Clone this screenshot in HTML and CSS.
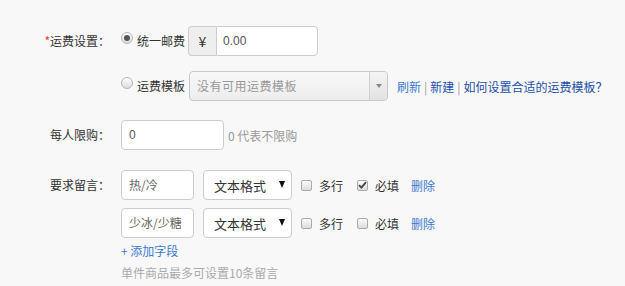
FILE: index.html
```html
<!DOCTYPE html>
<html lang="zh-CN">
  <head>
    <meta charset="UTF-8" />
    <meta name="viewport" content="width=device-width, initial-scale=1.0" />
    <title>运费设置</title>
    <link rel="stylesheet" href="styles.css">
  </head>
  <body>
    <div class="form">
      <!-- 运费设置 -->
      <div class="form-row row-freight">
        <div class="form-label"><span class="required">*</span>运费设置：</div>
        <div class="form-field">
          <div class="option">
            <label class="radio-label">
              <span class="radio checked"></span>
              <span class="radio-text">统一邮费</span>
            </label>
            <div class="input-group">
              <span class="input-addon">¥</span>
              <span class="input input-price">0.00</span>
            </div>
          </div>
          <div class="option">
            <label class="radio-label">
              <span class="radio"></span>
              <span class="radio-text">运费模板</span>
            </label>
            <div class="select-disabled">
              <span class="select-text">没有可用运费模板</span>
              <span class="select-arrow"></span>
            </div>
            <div class="links">
              <a class="link link-light">刷新</a>
              <span class="sep">|</span>
              <a class="link">新建</a>
              <span class="sep">|</span>
              <a class="link">如何设置合适的运费模板？</a>
            </div>
          </div>
        </div>
      </div>

      <!-- 每人限购 -->
      <div class="form-row row-limit">
        <div class="form-label">每人限购：</div>
        <div class="form-field">
          <div class="option">
            <span class="input input-limit">0</span>
            <span class="help">0 代表不限购</span>
          </div>
        </div>
      </div>

      <!-- 要求留言 -->
      <div class="form-row">
        <div class="form-label">要求留言：</div>
        <div class="form-field">
          <div class="message-list">
            <div class="option">
              <span class="input input-msg">热/冷</span>
              <div class="select">
                <span>文本格式</span>
                <span class="caret"></span>
              </div>
              <label class="check-label">
                <span class="checkbox"></span>
                <span>多行</span>
              </label>
              <label class="check-label">
                <span class="checkbox checked">
                  <svg width="9" height="8" viewBox="0 0 9 8">
                    <path d="M1 4.2 L3.4 6.6 L8 1.2" fill="none" stroke="#444" stroke-width="1.8" />
                  </svg>
                </span>
                <span>必填</span>
              </label>
              <a class="link-delete">删除</a>
            </div>
            <div class="option">
              <span class="input input-msg">少冰/少糖</span>
              <div class="select">
                <span>文本格式</span>
                <span class="caret"></span>
              </div>
              <label class="check-label">
                <span class="checkbox"></span>
                <span>多行</span>
              </label>
              <label class="check-label">
                <span class="checkbox"></span>
                <span>必填</span>
              </label>
              <a class="link-delete">删除</a>
            </div>
          </div>
          <a class="add-field">+ 添加字段</a>
          <p class="hint">单件商品最多可设置10条留言</p>
        </div>
      </div>
    </div>
  </body>
</html>
```

FILE: styles.css
```css
/* Reset and base styles */
* {
  margin: 0;
  padding: 0;
  box-sizing: border-box;
}

body {
  background-color: #f8f8f8;
  font-family: "Noto Sans CJK SC", "Liberation Sans", sans-serif;
  font-size: 12px;
  color: #333;
}

.form {
  padding-top: 26px;
}

/* Rows */
.form-row {
  display: flex;
  align-items: flex-start;
}

.row-freight {
  margin-bottom: 19px;
}

.row-limit {
  margin-bottom: 20px;
}

.form-label {
  width: 110px;
  flex-shrink: 0;
  text-align: right;
  line-height: 30px;
  margin-right: 11px;
}

.required {
  color: #e4393c;
}

.form-field {
  display: flex;
  flex-direction: column;
  gap: 15px;
}

.option {
  display: flex;
  align-items: center;
  height: 30px;
}

/* Inputs */
.input {
  height: 30px;
  line-height: 28px;
  padding: 0 7px;
  background-color: #fff;
  border: 1px solid #ccc;
  border-radius: 4px;
  font-family: "Liberation Sans", "Noto Sans CJK SC", sans-serif;
  color: #555;
}

.input-group {
  display: flex;
}

.input-addon {
  width: 28px;
  height: 30px;
  line-height: 28px;
  text-align: center;
  background-color: #eee;
  border: 1px solid #ccc;
  border-right: none;
  border-radius: 4px 0 0 4px;
  color: #333;
  font-size: 14px;
}

.input-price {
  width: 102px;
  border-radius: 0 4px 4px 0;
  padding-left: 6px;
}

.input-limit {
  width: 103px;
}

.input-msg {
  width: 73px;
  font-family: "Noto Sans CJK SC", sans-serif;
  color: #666;
  margin-right: 9px;
}

/* Radio */
.radio-label {
  display: flex;
  align-items: center;
  width: 67px;
}

.radio {
  width: 12px;
  height: 12px;
  border-radius: 50%;
  border: 1px solid #b5b5b5;
  background: linear-gradient(#fff, #dcdcdc);
  margin-right: 4px;
  margin-top: -6px;
  position: relative;
}

.radio.checked::after {
  content: "";
  position: absolute;
  top: 2px;
  left: 2px;
  width: 6px;
  height: 6px;
  border-radius: 50%;
  background-color: #555;
}

.radio-text {
  line-height: 16px;
}

/* Disabled select */
.select-disabled {
  display: flex;
  width: 199px;
  height: 30px;
  margin-left: 1px;
  border: 1px solid #c8c8c8;
  border-radius: 4px;
  background: linear-gradient(#f8f8f8, #ededed);
  color: #999;
}

.select-text {
  flex: 1;
  line-height: 28px;
  padding-left: 7px;
  letter-spacing: 0.5px;
}

.select-arrow {
  width: 18px;
  border-left: 1px solid #d0d0d0;
  display: flex;
  align-items: center;
  justify-content: center;
  background: linear-gradient(#f4f4f4, #e2e2e2);
  border-radius: 0 3px 3px 0;
}

.select-arrow::after {
  content: "";
  border-left: 3px solid transparent;
  border-right: 3px solid transparent;
  border-top: 4px solid #888;
}

/* Links */
.links {
  margin-left: 9px;
  display: flex;
  align-items: center;
  gap: 3px;
}

.link {
  color: #1e4fa8;
  cursor: pointer;
}

.link-light {
  color: #3c7ad0;
}

.sep {
  color: #999;
}

.help {
  margin-left: 4px;
  color: #999;
}

/* Message fields */
.message-list {
  display: flex;
  flex-direction: column;
  gap: 8px;
}

.select {
  display: flex;
  align-items: center;
  justify-content: space-between;
  width: 89px;
  height: 30px;
  padding: 0 6px 0 10px;
  margin-right: 9px;
  background-color: #fff;
  border: 1px solid #ccc;
  border-radius: 4px;
  font-size: 13px;
  color: #333;
}

.caret {
  border-left: 3.5px solid transparent;
  border-right: 3.5px solid transparent;
  border-top: 7px solid #111;
  margin-top: -2px;
}

.check-label {
  display: flex;
  align-items: center;
  margin-right: 14px;
}

.checkbox {
  width: 11px;
  height: 11px;
  border: 1px solid #aaa;
  border-radius: 2px;
  background: linear-gradient(#fcfcfc, #dcdcdc);
  margin-right: 7px;
  display: flex;
  align-items: center;
  justify-content: center;
}

.check-label:last-of-type {
  margin-right: 12px;
}

.link-delete {
  color: #3c7ad0;
  cursor: pointer;
}

.add-field {
  display: block;
  color: #3c7ad0;
  line-height: 18px;
  margin-top: -11px;
  cursor: pointer;
}

.hint {
  color: #aaa;
  line-height: 18px;
  margin-top: -11px;
}
```
